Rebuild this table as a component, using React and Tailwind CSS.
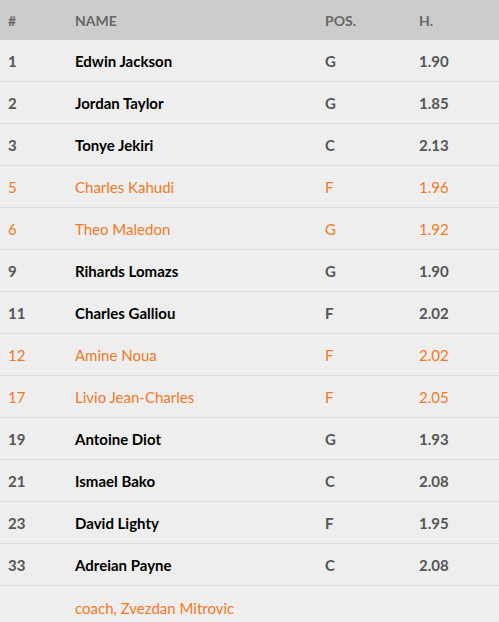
import React from "react";

const players = [
  { num: "1", name: "Edwin Jackson", pos: "G", h: "1.90" },
  { num: "2", name: "Jordan Taylor", pos: "G", h: "1.85" },
  { num: "3", name: "Tonye Jekiri", pos: "C", h: "2.13" },
  { num: "5", name: "Charles Kahudi", pos: "F", h: "1.96", hl: true },
  { num: "6", name: "Theo Maledon", pos: "G", h: "1.92", hl: true },
  { num: "9", name: "Rihards Lomazs", pos: "G", h: "1.90" },
  { num: "11", name: "Charles Galliou", pos: "F", h: "2.02" },
  { num: "12", name: "Amine Noua", pos: "F", h: "2.02", hl: true },
  { num: "17", name: "Livio Jean-Charles", pos: "F", h: "2.05", hl: true },
  { num: "19", name: "Antoine Diot", pos: "G", h: "1.93" },
  { num: "21", name: "Ismael Bako", pos: "C", h: "2.08" },
  { num: "23", name: "David Lighty", pos: "F", h: "1.95" },
  { num: "33", name: "Adreian Payne", pos: "C", h: "2.08" },
];

const Row = ({ p }) => {
  const orange = "text-[#f07a1e] font-normal";
  return (
    <div className="flex h-[42px] items-center border-b border-[#dcdcdc] pt-[2px] text-[15px]">
      <div className={`w-[75px] pl-2 ${p.hl ? orange : "font-bold text-[#555]"}`}>{p.num}</div>
      <div className={`w-[250px] ${p.hl ? orange : "font-bold text-black"}`}>{p.name}</div>
      <div className={`w-[94px] ${p.hl ? orange : "font-bold text-[#555]"}`}>{p.pos}</div>
      <div className={`flex-1 ${p.hl ? orange : "font-bold text-[#555]"}`}>{p.h}</div>
    </div>
  );
};

export default function App() {
  return (
    <div className="min-h-screen bg-[#eeeeee] font-['Lato',sans-serif]">
      <div className="flex h-[40px] items-center bg-[#cccccc] text-[14px] font-bold text-[#666]">
        <div className="w-[75px] pl-2">#</div>
        <div className="w-[250px]">NAME</div>
        <div className="w-[94px]">POS.</div>
        <div className="flex-1">H.</div>
      </div>
      {players.map((p) => (
        <Row key={p.num} p={p} />
      ))}
      <div className="flex h-[42px] items-center pt-[2px] text-[15px]">
        <div className="w-[75px] pl-2"></div>
        <div className="text-[#f07a1e]">coach, Zvezdan Mitrovic</div>
      </div>
    </div>
  );
}
